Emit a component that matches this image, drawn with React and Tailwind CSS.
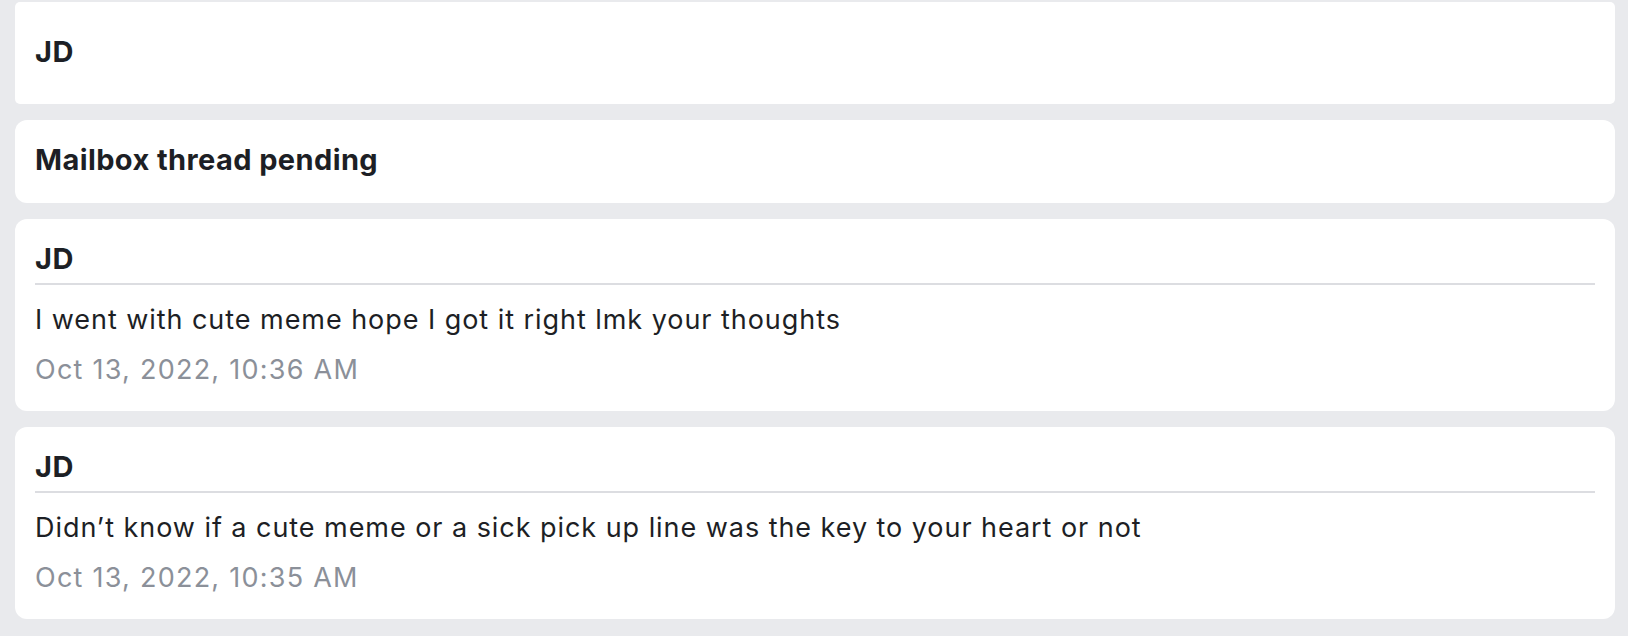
import React from 'react';

const MESSAGES = [
    {
        author: 'JD',
        body: 'I went with cute meme hope I got it right lmk your thoughts',
        time: 'Oct 13, 2022, 10:36 AM',
    },
    {
        author: 'JD',
        body: 'Didn’t know if a cute meme or a sick pick up line was the key to your heart or not',
        time: 'Oct 13, 2022, 10:35 AM',
    },
];

function MessageCard({ author, body, time }) {
    return (
        <div className="bg-white rounded-[12px] px-5 pt-[23px] pb-[25px]">
            <p className="text-[29px] leading-[34px] font-bold tracking-[0.6px]">{author}</p>
            <div className="mt-[7px] h-[2px] bg-[#dcdde1]"></div>
            <p className="mt-[19px] text-[27px] leading-[32px] tracking-[0.95px]">{body}</p>
            <p className="mt-[18px] text-[27px] leading-[32px] tracking-[1.25px] text-[#8b9099]">{time}</p>
        </div>
    );
}

export default function App() {
    return (
        <div
            className="min-h-screen bg-[#e9eaed] pt-[2px] pl-[15px] pr-[13px] pb-4 text-[#1d1f25]"
            style={{ fontFamily: 'Inter, "Noto Sans", sans-serif' }}
        >
            <div className="flex flex-col gap-4">
                <div className="bg-white rounded-[5px] px-5 pt-[33px] pb-[35px]">
                    <p className="text-[29px] leading-[34px] font-bold tracking-[0.6px]">JD</p>
                </div>

                <div className="bg-white rounded-[12px] px-5 pt-[22px] pb-[26px]">
                    <p className="text-[29px] leading-[35px] font-bold tracking-[0.4px]">Mailbox thread pending</p>
                </div>

                {MESSAGES.map((m, i) => (
                    <MessageCard key={i} {...m} />
                ))}
            </div>
        </div>
    );
}
